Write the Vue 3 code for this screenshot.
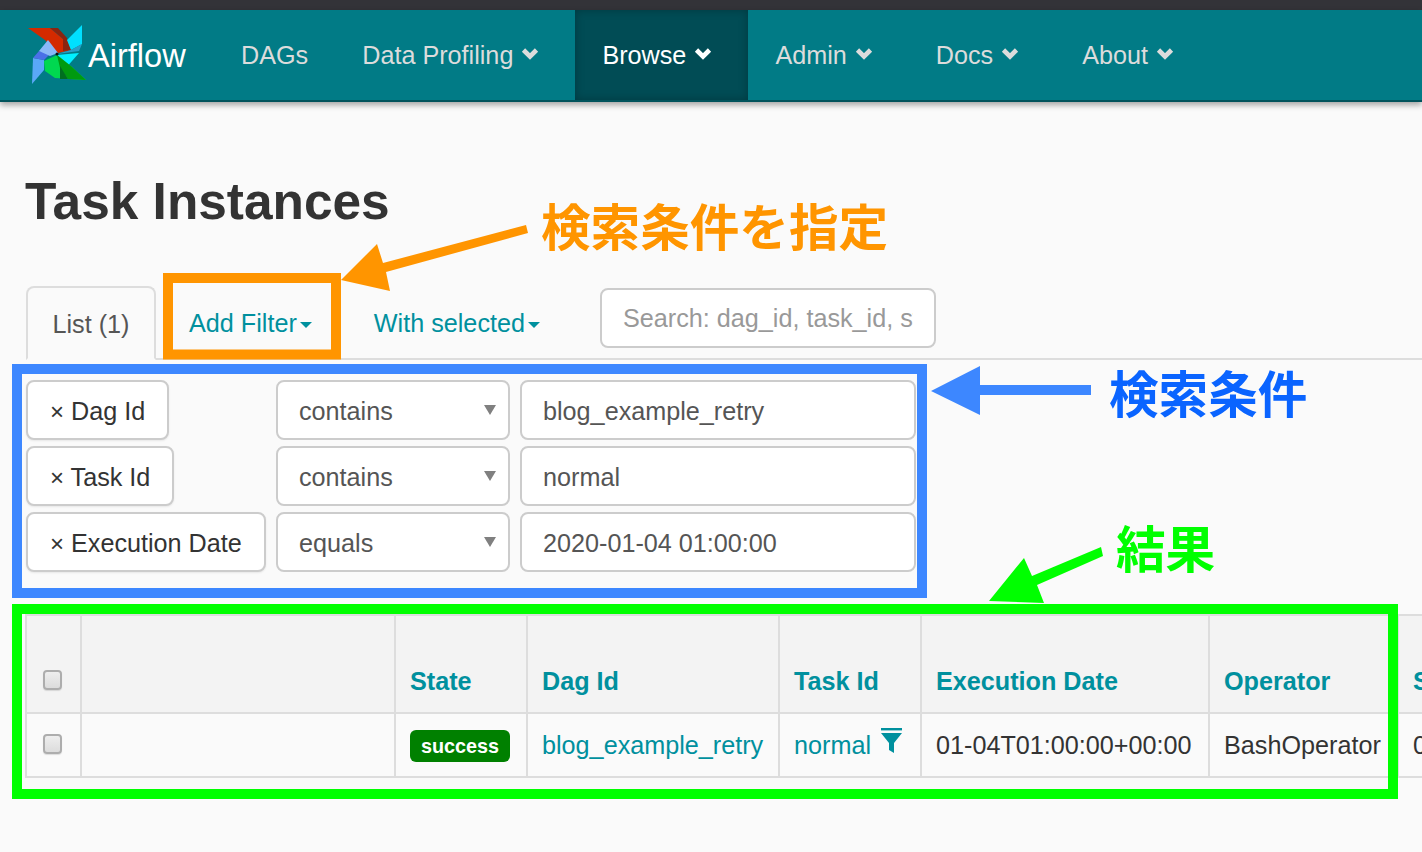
<script setup>
const navItems = [
  { label: 'DAGs', caret: false },
  { label: 'Data Profiling', caret: true },
  { label: 'Browse', caret: true, active: true },
  { label: 'Admin', caret: true },
  { label: 'Docs', caret: true },
  { label: 'About', caret: true },
]
const filters = [
  { name: 'Dag Id', op: 'contains', value: 'blog_example_retry' },
  { name: 'Task Id', op: 'contains', value: 'normal' },
  { name: 'Execution Date', op: 'equals', value: '2020-01-04 01:00:00' },
]
const columns = ['State', 'Dag Id', 'Task Id', 'Execution Date', 'Operator', 'Start Date']
const colWidths = [55, 314, 132, 252, 142, 288, 189, 300]
</script>

<template>
  <div class="page">
    <div class="topbar"></div>
    <nav class="nav">
      <a class="brand">
        <svg class="logo" viewBox="0 0 60 64" width="60" height="64">
          <g transform="translate(-26 -25)">
            <polygon points="28,30 50,30 63,41 71,52 58,55 45,42" fill="#d42a00" />
            <polygon points="50,30 58,30 67,40 71,52 63,53 63,41" fill="#8a2410" />
            <polygon points="82,27 67,42 71,52 82,46" fill="#00e0ff" />
            <polygon points="82,46 71,52 57,56 79,53" fill="#2aa0c8" />
            <polygon points="79,55 57,57 65,71" fill="#00f0ff" />
            <polygon points="86,82 72,69 57,57 44,63 45,73 55,80" fill="#00d850" />
            <polygon points="86,82 72,69 57,57 60,70 68,81" fill="#009a10" />
            <polygon points="60,68 68,81 60,81" fill="#006e20" />
            <polygon points="32,86 44,72 44,62 33,60" fill="#5aa8f8" />
            <polygon points="33,60 44,62 50,56 39,53" fill="#4a70e8" />
            <polygon points="39,53 48,42 58,55 50,58" fill="#8ab8f8" />
            <circle cx="57" cy="56" r="1.5" fill="#101010" />
          </g>
        </svg>
        <span>Airflow</span>
      </a>
      <a v-for="item in navItems" :key="item.label" class="nav-item" :class="{ active: item.active }">
        <span>{{ item.label }}</span>
        <svg v-if="item.caret" class="chev" viewBox="0 0 18 14" width="18" height="14">
          <polyline points="2.5,3 9,9.5 15.5,3" fill="none" stroke="currentColor" stroke-width="4.6" />
        </svg>
      </a>
    </nav>

    <main class="content">
      <h2 class="title">Task Instances</h2>

      <div class="tabs">
        <div class="tab current">List (1)</div>
        <a class="tab-link first">Add Filter<i class="caret"></i></a>
        <a class="tab-link second">With selected<i class="caret"></i></a>
        <div class="search"><span>Search: dag_id, task_id, state</span></div>
      </div>

      <div class="filters">
        <div v-for="f in filters" :key="f.name" class="filter-row">
          <div class="name-col">
            <span class="filter-btn"><span class="times">×</span> {{ f.name }}</span>
          </div>
          <div class="select">{{ f.op }}<i class="tri"></i></div>
          <div class="value">{{ f.value }}</div>
        </div>
      </div>

      <div class="table-wrap">
        <table class="grid">
          <colgroup>
            <col v-for="(w, i) in colWidths" :key="i" :style="{ width: w + 'px' }" />
          </colgroup>
          <thead>
            <tr>
              <th class="check"><span class="box"></span></th>
              <th></th>
              <th v-for="c in columns" :key="c"><a>{{ c }}</a></th>
            </tr>
          </thead>
          <tbody>
            <tr>
              <td class="check"><span class="box"></span></td>
              <td></td>
              <td><span class="label">success</span></td>
              <td><a>blog_example_retry</a></td>
              <td class="task">
                <a>normal</a>
                <svg class="funnel" viewBox="0 0 21 26" width="21" height="26">
                  <rect x="0" y="0" width="21" height="2.4" fill="#00909e" />
                  <polygon points="0,5 21,5 13,15 13,25 8,22 8,15" fill="#00909e" />
                </svg>
              </td>
              <td>01-04T01:00:00+00:00</td>
              <td>BashOperator</td>
              <td>01-04T01:00:03+00:00</td>
            </tr>
          </tbody>
        </table>
      </div>
    </main>

    <svg class="marks" viewBox="0 0 1422 852" width="1422" height="852">
      <rect x="168" y="278" width="168" height="76.5" fill="none" stroke="#ff9500" stroke-width="10" />
      <rect x="17" y="369" width="905" height="224" fill="none" stroke="#3d87ff" stroke-width="10" />
      <rect x="17" y="609" width="1376" height="185" fill="none" stroke="#00ff00" stroke-width="10" />
      <polygon points="341,280 377,244 383,263 526,225 528,233 386,272 390,291" fill="#ff9500" />
      <polygon points="931,391 980,366 980,385 1091,385 1091,395 980,395 980,415" fill="#3d87ff" />
      <polygon points="989,601 1024,558 1032,576 1101,547 1103,556 1037,585 1044,603" fill="#00ff00" />
    </svg>
    <span class="note orange">検索条件を指定</span>
    <span class="note blue">検索条件</span>
    <span class="note green">結果</span>
  </div>
</template>

<style scoped>
.page {
  position: relative;
  width: 1422px;
  height: 852px;
  overflow: hidden;
  background: #fafafa;
  font-family: "Liberation Sans", Arial, sans-serif;
  font-size: 25.2px;
  color: #333;
}
.topbar {
  height: 10px;
  background: #333338;
}
.nav {
  display: flex;
  align-items: stretch;
  height: 90px;
  background: #017b86;
  border-bottom: 2px solid #00535c;
  box-shadow: 0 3px 6px rgba(0, 0, 0, 0.35);
  position: relative;
  box-sizing: content-box;
}
.brand {
  display: flex;
  align-items: center;
  width: 214px;
  box-sizing: border-box;
  padding-left: 26px;
  color: #fff;
  font-size: 32.6px;
}
.logo {
  flex: none;
  margin-right: 2px;
}
.brand span {
  position: relative;
  top: 1px;
}
.nav-item {
  display: flex;
  align-items: center;
  padding: 0 27px;
  color: #dcdcdc;
  font-size: 25.2px;
}
.nav-item.active {
  color: #fff;
  background: #014c55;
  box-shadow: inset 0 0 10px rgba(0, 0, 0, 0.25);
}
.chev {
  margin: -3px 9px 0 8px;
  flex: none;
}
.content {
  padding: 0;
}
.title {
  margin: 70px 0 0 25px;
  height: 114px;
  font-size: 51.4px;
  line-height: 58px;
  font-weight: 700;
  color: #333;
}
.tabs {
  display: flex;
  align-items: flex-start;
  margin-left: 26px;
  height: 74px;
  box-sizing: border-box;
  border-bottom: 2px solid #ddd;
}
.tab.current {
  width: 130px;
  height: 74px;
  box-sizing: border-box;
  border: 2px solid #ddd;
  border-bottom-color: #fafafa;
  border-radius: 8px 8px 0 0;
  color: #555;
  text-align: center;
  line-height: 72px;
}
.tab-link {
  color: #00909e;
  line-height: 74px;
  display: flex;
  align-items: center;
  white-space: nowrap;
}
.tab-link.first {
  margin-left: 33px;
}
.tab-link.second {
  margin-left: 62px;
}
.caret {
  display: inline-block;
  margin-left: 3px;
  margin-top: 3px;
  border-top: 6px solid #00909e;
  border-left: 6.5px solid transparent;
  border-right: 6.5px solid transparent;
}
.search {
  margin: 2px 0 0 60px;
  width: 336px;
  height: 60px;
  box-sizing: border-box;
  padding: 0 21px;
  border: 2px solid #ccc;
  border-radius: 8px;
  background: #fff;
  color: #999;
  line-height: 56px;
  flex: none;
}
.search span {
  display: block;
  white-space: nowrap;
  overflow: hidden;
}
.filters {
  margin: 20px 0 0 26px;
  display: flex;
  flex-direction: column;
  gap: 6px;
}
.filter-row {
  display: flex;
  height: 60px;
}
.name-col {
  width: 250px;
  flex: none;
}
.filter-btn {
  display: inline-block;
  height: 60px;
  box-sizing: border-box;
  padding: 0 22px;
  border: 2px solid #ccc;
  border-radius: 8px;
  background: #fff;
  box-shadow: 0 1px 2px rgba(0, 0, 0, 0.08);
  line-height: 58px;
  color: #333;
  white-space: nowrap;
}
.times {
  font-size: 24px;
}
.select {
  position: relative;
  width: 234px;
  height: 60px;
  box-sizing: border-box;
  padding-left: 21px;
  border: 2px solid #ccc;
  border-radius: 8px;
  background: #fff;
  color: #555;
  line-height: 58px;
}
.tri {
  position: absolute;
  right: 12px;
  top: 23px;
  border-top: 10px solid #808080;
  border-left: 6px solid transparent;
  border-right: 6px solid transparent;
}
.value {
  margin-left: 10px;
  width: 396px;
  height: 60px;
  box-sizing: border-box;
  padding-left: 21px;
  border: 2px solid #ccc;
  border-radius: 8px;
  background: #fff;
  color: #555;
  line-height: 58px;
}
.table-wrap {
  margin: 42px 0 0 25px;
  width: 1397px;
  overflow: hidden;
}
.grid {
  table-layout: fixed;
  width: 1672px;
  border-collapse: separate;
  border-spacing: 0;
  border-left: 2px solid #ddd;
  border-top: 2px solid #ddd;
}
.grid th,
.grid td {
  box-sizing: border-box;
  padding: 0 14px;
  border-right: 2px solid #ddd;
  border-bottom: 2px solid #ddd;
  white-space: nowrap;
  overflow: hidden;
  text-align: left;
}
.grid th {
  height: 98px;
  background: #f3f3f3;
  vertical-align: bottom;
  padding-bottom: 15px;
  font-weight: 700;
  line-height: 32px;
}
.grid th.check {
  padding: 0 0 22px;
  text-align: center;
}
.grid td {
  height: 64px;
  line-height: 34px;
  vertical-align: middle;
}
.grid td.check {
  text-align: center;
  padding: 0 0 2px;
}
.grid a {
  color: #00909e;
}
.box {
  display: block;
  width: 19px;
  height: 20px;
  margin: 0 auto 0 16px;
  box-sizing: border-box;
  border: 2px solid #adadad;
  border-radius: 4px;
  background: linear-gradient(#eee, #dcdcdc);
  box-shadow: 0 1px 1px rgba(0, 0, 0, 0.12);
}
.label {
  display: block;
  width: 100px;
  height: 32px;
  margin-top: 2px;
  border-radius: 6px;
  background: #008000;
  color: #fff;
  font-size: 19.8px;
  font-weight: 700;
  line-height: 33px;
  text-align: center;
}
.task {
  position: relative;
}
.funnel {
  position: absolute;
  left: 101px;
  top: 14px;
}
.marks {
  position: absolute;
  left: 0;
  top: 0;
  pointer-events: none;
}
.note {
  position: absolute;
  font-family: "Noto Sans CJK JP", sans-serif;
  font-weight: 700;
  font-size: 49.6px;
  line-height: 60px;
  white-space: nowrap;
}
.orange {
  left: 541px;
  top: 194px;
  color: #ff9500;
}
.blue {
  left: 1109px;
  top: 361px;
  color: #0a64ff;
}
.green {
  left: 1116px;
  top: 516px;
  color: #00ff00;
}
</style>

<style>
html,
body {
  margin: 0;
  overflow: hidden;
  background: #fafafa;
}
</style>
